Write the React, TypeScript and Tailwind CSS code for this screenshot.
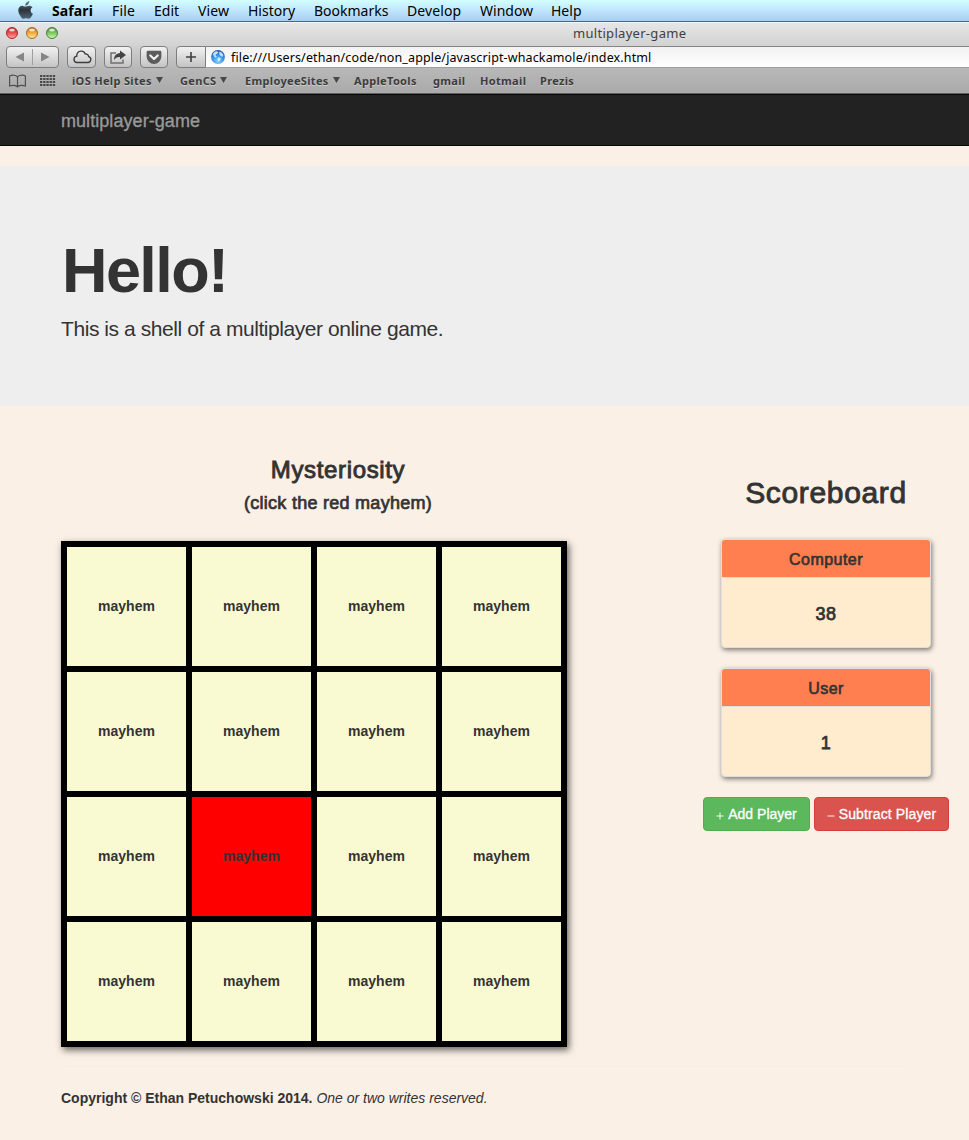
import React from "react";

const menus = [
  { label: "File", cls: "w-[42px] tracking-[0.2px]" },
  { label: "Edit", cls: "w-[44px] tracking-[0px]" },
  { label: "View", cls: "w-[50px] tracking-[0.1px]" },
  { label: "History", cls: "w-[66px] tracking-[0px]" },
  { label: "Bookmarks", cls: "w-[93px] tracking-[0px]" },
  { label: "Develop", cls: "w-[73px] tracking-[0.1px]" },
  { label: "Window", cls: "w-[71px] tracking-[0px]" },
  { label: "Help", cls: "w-[40px] tracking-[0px]" },
];

const bookmarks = [
  { label: "iOS Help Sites", cls: "w-[108px]", arrow: true },
  { label: "GenCS", cls: "w-[65px]", arrow: true },
  { label: "EmployeeSites", cls: "w-[109px]", arrow: true },
  { label: "AppleTools", cls: "w-[79px]", arrow: false },
  { label: "gmail", cls: "w-[47px]", arrow: false },
  { label: "Hotmail", cls: "w-[60px]", arrow: false },
  { label: "Prezis", cls: "w-[50px]", arrow: false },
];

const players = [
  { name: "Computer", score: 38 },
  { name: "User", score: 1 },
];

const RED_CELL = 9;

const BTN =
  "flex h-[22px] items-center justify-center rounded-[4px] border border-[#7d7d7d] bg-linear-to-b from-[#f2f2f2] to-[#c4c4c4]";

function MenuBar() {
  return (
    <div className="flex h-[22px] items-center border-b border-[#46698a] bg-linear-to-b from-[#d2ffff] via-[#bfe6fd] to-[#a9cdee] font-['Noto_Sans'] text-[14px] leading-[21px] text-black">
      <svg className="-mt-[2px] ml-[17px] w-[17px] shrink-0" height="18" viewBox="0 0 17 18">
        <defs>
          <linearGradient id="apple" x1="0" y1="0" x2="0" y2="1">
            <stop offset="0" stopColor="#6f7f8b" />
            <stop offset="0.5" stopColor="#2c3339" />
            <stop offset="1" stopColor="#4e6677" />
          </linearGradient>
        </defs>
        <path
          fill="url(#apple)"
          d="M12.3 0c.1 1.300-.4 2.400-1.200 3.200-.8.900-1.800 1.300-2.800 1.200-.1-1.200.4-2.200 1.200-3C10.300.600 11.400.100 12.300 0zM15.500 6.300c-1.300.8-1.900 1.800-1.900 3.100 0 1.500.9 2.800 2.300 3.400-.4 1.200-1 2.300-1.800 3.300-.7.900-1.400 1.700-2.400 1.700-.9 0-1.400-.6-2.600-.6s-1.700.6-2.600.6c-1 0-1.800-.9-2.500-1.900C2.400 13.700 1.300 11.500 1.300 9.400c0-2.900 1.800-4.600 3.900-4.600 1.200 0 2.300.8 3.200.8.800 0 2-.8 3.500-.8 1.400 0 2.700.5 3.600 1.500z"
        />
      </svg>
      <span className="ml-[18px] w-[60px] font-bold tracking-[0.1px]">Safari</span>
      {menus.map((m) => (
        <span key={m.label} className={`whitespace-nowrap ${m.cls}`}>
          {m.label}
        </span>
      ))}
    </div>
  );
}

function Light({ id, edge, mid, glow }: { id: string; edge: string; mid: string; glow: string }) {
  return (
    <svg width="12" height="12" viewBox="0 0 12 12">
      <defs>
        <linearGradient id={id} x1="0" y1="0" x2="0" y2="1">
          <stop offset="0" stopColor={edge} />
          <stop offset="0.5" stopColor={mid} />
          <stop offset="1" stopColor={glow} />
        </linearGradient>
      </defs>
      <circle cx="6" cy="6" r="5.500" fill={`url(#${id})`} stroke={edge} strokeWidth="1" />
      <ellipse cx="6" cy="2.900" rx="2.800" ry="1.500" fill="#fff" opacity="0.75" />
    </svg>
  );
}

function TitleBar() {
  return (
    <div className="flex h-[24px] items-center border-t border-[#f5f5f5] bg-linear-to-b from-[#e6e6e6] to-[#d2d2d2] pb-[3px] pl-[6px]">
      <div className="flex gap-[8px]">
        <Light id="r" edge="#a62a2c" mid="#ee4f50" glow="#ffaaa4" />
        <Light id="y" edge="#a9691f" mid="#f3ab3e" glow="#fff0a0" />
        <Light id="g" edge="#45803a" mid="#7fc863" glow="#d2fab4" />
      </div>
      <span className="ml-[515px] whitespace-nowrap font-['Noto_Sans'] text-[13px] leading-[20px] tracking-[0.3px] text-[#404040]">
        multiplayer-game
      </span>
    </div>
  );
}

function Toolbar() {
  return (
    <div className="flex h-[22px] bg-linear-to-b from-[#d0d0d0] to-[#b8b8b8] pl-[6px]">
      <div className={`${BTN} w-[53px]`}>
        <svg width="51" height="20" viewBox="0 0 51 20">
          <path d="M17 5.500v9L8.500 10z" fill="#858585" />
          <path d="M34 5.500v9l8.500-4.500z" fill="#858585" />
          <path d="M25.500 2v16" stroke="#a0a0a0" />
        </svg>
      </div>
      <div className={`${BTN} ml-[8px] w-[29px]`}>
        <svg width="20" height="14" viewBox="0 0 20 14" fill="none" stroke="#3c3c3c" strokeWidth="1.300">
          <path d="M4.500 12.500h11.200a3 3 0 0 0 .9-5.900A3 3 0 0 0 13.200 4a4.300 4.300 0 0 0-8.300.8c-.2.500-.2.900-.1 1.400a3.200 3.200 0 0 0-.3 6.300z" />
        </svg>
      </div>
      <div className={`${BTN} ml-[8px] w-[28px]`}>
        <svg width="18" height="16" viewBox="0 0 18 16" fill="none">
          <path d="M7 4H2v10h12v-3.500" stroke="#707070" strokeWidth="1.500" />
          <path d="M11 1.500 17 6l-6 4.500V8C8 7.900 6.500 8.800 5 11c0-4 2.300-6.600 6-6.900z" fill="#444" />
        </svg>
      </div>
      <div className={`${BTN} ml-[8px] w-[28px]`}>
        <svg width="16" height="15" viewBox="0 0 16 15">
          <path d="M2 .700h12a1.400 1.400 0 0 1 1.400 1.400v4.500a7.400 7.400 0 0 1-14.800 0V2.100A1.400 1.400 0 0 1 2 .700z" fill="#5c5c5c" />
          <path d="M4.300 5.500 8 9l3.700-3.500" fill="none" stroke="#f0f0f0" strokeWidth="2.200" strokeLinecap="round" strokeLinejoin="round" />
        </svg>
      </div>
      <div className="ml-[8px] flex h-[22px] w-[30px] items-center justify-center rounded-l-[4px] border border-[#7d7d7d] bg-linear-to-b from-[#f2f2f2] to-[#c4c4c4]">
        <svg width="12" height="12" viewBox="0 0 12 12" stroke="#3f3f3f" strokeWidth="1.600">
          <path d="M6 1v10M1 6h10" />
        </svg>
      </div>
      <div className="flex h-[22px] grow items-center border-y border-t-[#858585] border-b-[#a0a0a0] bg-linear-to-b from-[#f2f2f2] to-white pl-[5px]">
        <svg width="14" height="14" viewBox="0 0 14 14">
          <defs>
            <radialGradient id="globe" cx="0.5" cy="0.8" r="0.85">
              <stop offset="0" stopColor="#7fd4ff" />
              <stop offset="0.600" stopColor="#2f86dc" />
              <stop offset="1" stopColor="#1c4c9c" />
            </radialGradient>
          </defs>
          <circle cx="7" cy="7" r="6.900" fill="url(#globe)" />
          <path
            d="M1.800 4C2.700 2.300 4 1.300 5.600 1.200L7.300 2 6.600 3.500 5 4.200 4.600 5.600l1.200 1-1 1.200-1.700-1.300zM8.400 1.600l2.200.8L12.400 5l-1 1.700-1.800-.8-1.300-1.600zM7.200 7.200l2.600.9-.6 2.100-1.600 1.500-1.200-2.600z"
            fill="#e6f6ff"
            opacity="0.800"
          />
        </svg>
        <span className="ml-[6px] mt-[1px] whitespace-nowrap font-['Noto_Sans'] text-[12.5px] leading-[18px] tracking-[0.13px] text-black">
          file:///Users/ethan/code/non_apple/javascript-whackamole/index.html
        </span>
      </div>
    </div>
  );
}

function BookmarksBar() {
  return (
    <div className="flex h-[26px] items-center border-b border-[#606060] bg-linear-to-b from-[#b8b8b8] to-[#aaaaaa] font-['Noto_Sans'] text-[11px] font-bold tracking-[0.33px] text-[#3c3c3c] [text-shadow:0_1px_0_#ffffff66]">
      <svg className="ml-[8px]" width="19" height="14" viewBox="0 0 19 14" fill="none" stroke="#505050" strokeWidth="1.200">
        <path d="M9.500 2.800C8 1 4 .700 1.600 2v10c2.600-1 6.400-.8 7.900.8 1.500-1.600 5.300-1.800 7.900-.8V2C15 .700 11 1 9.500 2.800zM9.500 2.800v10" />
      </svg>
      <svg className="ml-[13px]" width="16" height="12" viewBox="0 0 16 12" fill="#484848">
        {[0, 3, 6, 9].map((y) =>
          [0, 3.2, 6.4, 9.6, 12.8].map((x) => <rect key={`${x}-${y}`} x={x} y={y} width="2.300" height="2" />)
        )}
      </svg>
      <div className="ml-[16px] mt-[1px] flex">
        {bookmarks.map((b) => (
          <div key={b.label} className={`flex items-center gap-[4px] whitespace-nowrap ${b.cls}`}>
            {b.label}
            {b.arrow && (
              <svg className="-mt-[2px]" width="7" height="6" viewBox="0 0 7 6" fill="#484848">
                <path d="M0 0h7L3.500 6z" />
              </svg>
            )}
          </div>
        ))}
      </div>
    </div>
  );
}

function Board() {
  return (
    <div className="mt-[26px] grid w-[506px] grid-cols-4 gap-[6px] bg-black p-[6px] shadow-[2px_3px_7px_rgba(0,0,0,0.6)]">
      {Array.from({ length: 16 }, (_, i) => (
        <div
          key={i}
          className={`flex h-[119px] items-center justify-center text-[14px] font-bold ${i === RED_CELL ? "bg-[#ff0000]" : "bg-[#fafad2]"}`}
        >
          mayhem
        </div>
      ))}
    </div>
  );
}

function Scoreboard() {
  return (
    <section className="ml-[136px] flex w-[246px] flex-col items-center">
      <h2 className="mt-[70px] text-[30px] leading-[33px] tracking-[0.65px] [-webkit-text-stroke:0.9px_#333]">Scoreboard</h2>
      <div className="mt-[30px] flex flex-col gap-[20px]">
        {players.map((p) => (
          <div
            key={p.name}
            className="h-[109px] w-[210px] overflow-hidden rounded-[4px] border border-[#ddd] bg-[#ffebcd] text-center shadow-[1px_2px_5px_rgba(0,0,0,0.5)]"
          >
            <div className="h-[38px] border-b border-[#ddd] bg-[#ff7f50] pt-[2px] text-[16px] leading-[36px] tracking-[0.45px] [-webkit-text-stroke:0.65px_#333]">
              {p.name}
            </div>
            <div className="pt-[1px] text-[18px] leading-[70px] tracking-[0.4px] [-webkit-text-stroke:0.75px_#333]">{p.score}</div>
          </div>
        ))}
      </div>
      <div className="mt-[20px] flex gap-[4px] text-[14px] text-white">
        <button className="flex h-[34px] w-[107px] items-center justify-center gap-[4px] whitespace-nowrap rounded-[4px] border border-[#4cae4c] bg-[#5cb85c]">
          <svg className="mt-[4px]" width="8" height="8" viewBox="0 0 8 8" stroke="#fff" strokeWidth="0.900">
            <path d="M4 .500v7M.500 4h7" />
          </svg>
          <span className="[-webkit-text-stroke:0.3px_#fff]">Add Player</span>
        </button>
        <button className="flex h-[34px] w-[135px] items-center justify-center gap-[4px] whitespace-nowrap rounded-[4px] border border-[#d43f3a] bg-[#d9534f]">
          <svg className="mt-[4px]" width="8" height="8" viewBox="0 0 8 8" stroke="#fff" strokeWidth="0.900">
            <path d="M.500 4h7" />
          </svg>
          <span className="tracking-[0.12px] [-webkit-text-stroke:0.3px_#fff]">Subtract Player</span>
        </button>
      </div>
    </section>
  );
}

export default function App() {
  return (
    <div className="h-[1140px] w-[969px] overflow-hidden bg-[#faf0e6] font-['Liberation_Sans',sans-serif] text-[#333]">
      <MenuBar />
      <TitleBar />
      <Toolbar />
      <BookmarksBar />
      <nav className="flex h-[52px] items-center border-y border-[#080808] bg-[#222] pl-[61px] pt-[2px]">
        <span className="text-[18px] tracking-[0.06px] text-[#999] [-webkit-text-stroke:0.35px_#999]">multiplayer-game</span>
      </nav>
      <header className="mt-[20px] h-[240px] bg-[#eee] pl-[61px] pt-[70px]">
        <h1 className="pl-px text-[63px] font-bold leading-[69px] tracking-[-1.6px]">Hello!</h1>
        <p className="mt-[9px] text-[21px] leading-[30px] tracking-[-0.43px]">This is a shell of a multiplayer online game.</p>
      </header>
      <main className="flex pl-[61px]">
        <section className="w-[506px]">
          <div className="pl-[49px]">
            <div className="w-[456px] text-center">
              <h3 className="pt-[50px] text-[24px] leading-[27px] tracking-[0.65px] [-webkit-text-stroke:0.9px_#333]">Mysteriosity</h3>
              <p className="mt-[8px] text-[18px] leading-[24px] tracking-[0.27px] [-webkit-text-stroke:0.7px_#333]">
                (click the red mayhem)
              </p>
            </div>
          </div>
          <Board />
        </section>
        <Scoreboard />
      </main>
      <hr className="mx-[61px] mt-[19px] border-[#f5eee6]" />
      <footer className="mt-[21px] pl-[61px] text-[14px] leading-[20px]">
        <b>Copyright © Ethan Petuchowski 2014.</b> <i>One or two writes reserved.</i>
      </footer>
    </div>
  );
}
